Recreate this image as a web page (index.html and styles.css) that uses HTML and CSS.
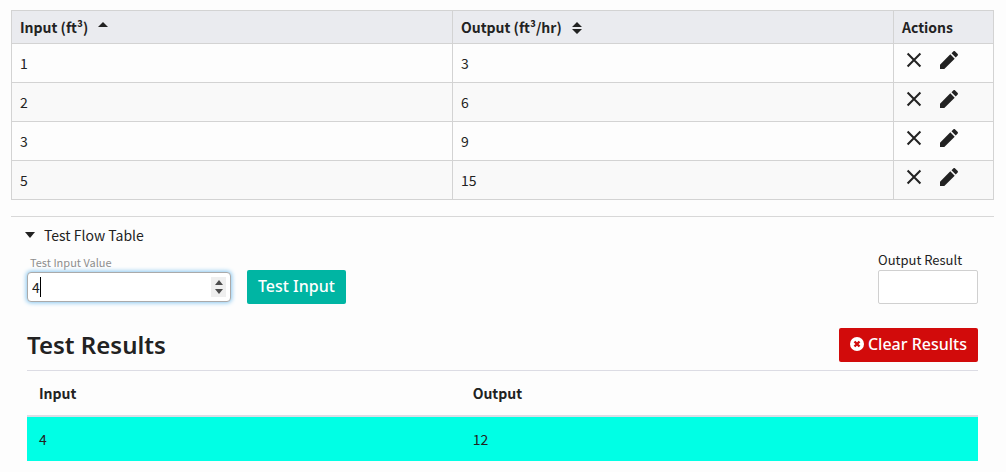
FILE: index.html
```html
<!DOCTYPE html>
<html lang="en">
<head>
<meta charset="utf-8">
<meta name="viewport" content="width=device-width, initial-scale=1">
<title>Flow Table</title>
<link rel="stylesheet" href="styles.css">
</head>
<body>
<svg class="sprite" aria-hidden="true">
  <symbol id="cross" viewBox="0 0 24 24"><path d="M5 5L19 19M19 5L5 19" fill="none" stroke="currentColor" stroke-width="2.200"/></symbol>
  <symbol id="pencil" viewBox="0 0 24 24"><path d="M3 16.700V21h4.300L17.700 10.700 13.300 6.300zM20.700 7.500c.4-.4.4-1 0-1.400l-2.800-2.800c-.4-.4-1-.4-1.400 0l-2 2 4.200 4.200z" fill="currentColor"/></symbol>
</svg>
<main class="page">
  <table class="flow">
    <colgroup><col><col><col class="col-actions"></colgroup>
    <thead>
      <tr>
        <th scope="col" aria-sort="ascending">Input (ft³)<svg class="sort" viewBox="0 0 10 14" aria-hidden="true"><path d="M0 6L5 1L10 6z"/></svg></th>
        <th scope="col">Output (ft³/hr)<svg class="sort" viewBox="0 0 10 14" aria-hidden="true"><path d="M0 6L5 1L10 6zM0 8L5 13L10 8z"/></svg></th>
        <th scope="col">Actions</th>
      </tr>
    </thead>
    <tbody>
      <tr><td>1</td><td>3</td><td class="actions"><div class="action-list"><button type="button" class="icon-button" aria-label="Delete"><svg class="cross"><use href="#cross"/></svg></button><button type="button" class="icon-button" aria-label="Edit"><svg class="pencil"><use href="#pencil"/></svg></button></div></td></tr>
      <tr><td>2</td><td>6</td><td class="actions"><div class="action-list"><button type="button" class="icon-button" aria-label="Delete"><svg class="cross"><use href="#cross"/></svg></button><button type="button" class="icon-button" aria-label="Edit"><svg class="pencil"><use href="#pencil"/></svg></button></div></td></tr>
      <tr><td>3</td><td>9</td><td class="actions"><div class="action-list"><button type="button" class="icon-button" aria-label="Delete"><svg class="cross"><use href="#cross"/></svg></button><button type="button" class="icon-button" aria-label="Edit"><svg class="pencil"><use href="#pencil"/></svg></button></div></td></tr>
      <tr><td>5</td><td>15</td><td class="actions"><div class="action-list"><button type="button" class="icon-button" aria-label="Delete"><svg class="cross"><use href="#cross"/></svg></button><button type="button" class="icon-button" aria-label="Edit"><svg class="pencil"><use href="#pencil"/></svg></button></div></td></tr>
    </tbody>
  </table>

  <details class="tester" open>
    <summary class="summary"><svg class="marker" viewBox="0 0 10 6" aria-hidden="true"><path d="M0 0H10L5 6z"/></svg>Test Flow Table</summary>
    <div class="tester-body">
      <form class="test-form">
        <div class="field">
          <label class="field-label" for="test-value">Test Input Value</label>
          <div class="number">
            <input class="number-input" id="test-value" type="number" value="4">
            <span class="caret" aria-hidden="true"></span>
            <span class="spinner" aria-hidden="true"><svg class="spinner-icon" viewBox="0 0 8 14"><path d="M0 5L4 0L8 5zM0 9H8L4 14z"/></svg></span>
          </div>
        </div>
        <button type="button" class="button">Test Input</button>
        <div class="result">
          <label class="result-label" for="result">Output Result</label>
          <input class="result-input" id="result" type="text" readonly>
        </div>
      </form>
      <div class="results-head">
        <h2 class="title">Test Results</h2>
        <button type="button" class="button danger"><svg class="clear-icon" viewBox="0 0 14 14" aria-hidden="true"><circle cx="7" cy="7" r="7" fill="#fff"/><path d="M4.500 4.500L9.500 9.500M9.500 4.500L4.500 9.500" stroke="#d20b0b" stroke-width="2.400"/></svg>Clear Results</button>
      </div>
      <table class="results">
        <thead><tr><th scope="col">Input</th><th scope="col">Output</th></tr></thead>
        <tbody><tr><td>4</td><td>12</td></tr></tbody>
      </table>
    </div>
  </details>
</main>
</body>
</html>
```
FILE: styles.css
```css
* { box-sizing: border-box; }
body {
  margin: 0;
  background: #fdfdfd;
  color: #222;
  font: 14px/20px "Noto Sans CJK SC", "Noto Sans", sans-serif;
}
button, input { font: inherit; color: inherit; }
svg { fill: currentColor; }
.sprite { display: none; }
.page { padding: 10px 12px 10px 11px; }

table { width: 100%; border-collapse: collapse; table-layout: fixed; }
th, td { text-align: left; }
.col-actions { width: 100px; }
.flow th, .flow td { border: 1px solid #d3d3d3; padding: 0 8px; }
.flow th { height: 33px; background: #eaebef; }
.flow td { height: 39px; }
.flow tbody tr:nth-child(even) { background: #f9f9f9; }
.sort { width: 10px; height: 14px; margin-left: 10px; vertical-align: -2px; }
.flow .actions { padding: 0 8px; vertical-align: top; }
.action-list { display: flex; gap: 11px; padding-top: 4px; }
.icon-button {
  display: flex;
  align-items: center;
  justify-content: center;
  width: 24px;
  height: 24px;
  padding: 0;
  border: 0;
  background: none;
}
.cross { width: 22px; height: 22px; }
.pencil { width: 24px; height: 24px; }

.tester { margin-top: 16px; padding: 8px 16px 0; border-top: 1px solid #d8d8d8; }
.summary { display: flex; align-items: center; gap: 9px; list-style: none; }
.summary::-webkit-details-marker { display: none; }
.marker { width: 10px; height: 6px; margin-left: -2px; }
.test-form { display: flex; align-items: flex-end; gap: 16px; padding-top: 5px; }
.field { width: 204px; padding-bottom: 2px; }
.field-label { display: block; padding: 0 3px 2px; color: #8e8e8e; font-size: 11px; line-height: 16px; }
.number { position: relative; }
.number-input {
  display: block;
  width: 100%;
  height: 30px;
  padding: 0 4px;
  border: 1px solid #aaa;
  border-radius: 4px;
  outline: 0;
  background: #fff;
  box-shadow: 0 0 4px 1px #8ac8f0;
  appearance: textfield;
}
.number-input::-webkit-inner-spin-button { display: none; }
.caret { position: absolute; top: 5px; left: 13px; width: 1px; height: 20px; background: #000; }
.spinner {
  position: absolute;
  top: 5px;
  right: 5px;
  display: flex;
  align-items: center;
  justify-content: center;
  width: 15px;
  height: 20px;
  background: #efefef;
  color: #4d4d4d;
}
.spinner-icon { width: 8px; height: 14px; }
.button {
  display: flex;
  align-items: center;
  gap: 4px;
  height: 34px;
  padding: 0 11px 2px;
  border: 0;
  border-radius: 2px;
  background: #00b5a3;
  color: #fff;
  font: 500 16px/20px "Noto Sans", sans-serif;
  white-space: nowrap;
}
.danger { background: #d20b0b; }
.clear-icon { width: 14px; height: 14px; }
.result { width: 100px; margin-left: auto; }
.result-label { display: block; font-size: 13px; line-height: 20px; }
.result-input {
  display: block;
  width: 100%;
  height: 34px;
  border: 1px solid #d0d0d0;
  border-radius: 2px;
  background: #fff;
}
.results-head { display: flex; align-items: center; justify-content: space-between; padding: 24px 0 8px; }
.title { margin: 0; font: 600 24px/32px "Noto Sans", sans-serif; }
.results th, .results td { height: 44px; padding: 0 12px; }
.results { border-collapse: separate; border-spacing: 0; }
.results th { height: 47px; border-top: 1px solid #dcdce4; border-bottom: 2px solid #dcdce4; }
.results th:first-child { width: 45.6%; }
.results td { background: #00ffe5; }
```
